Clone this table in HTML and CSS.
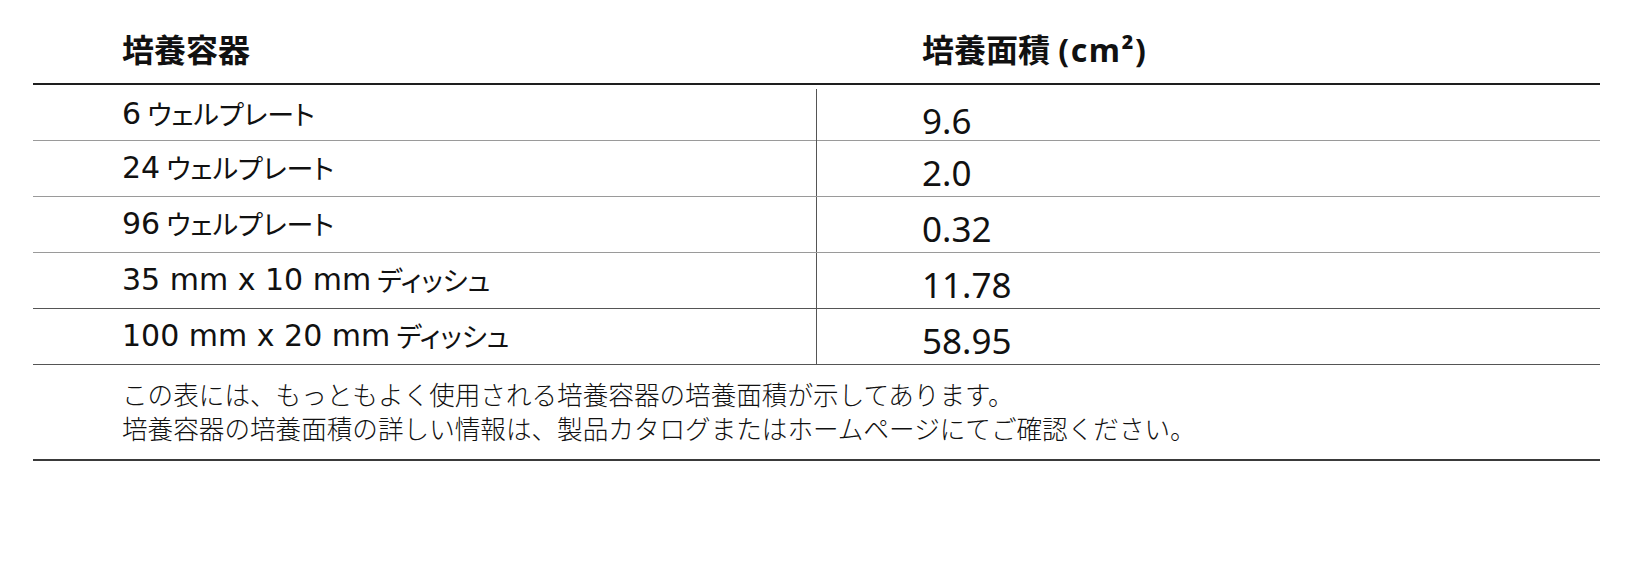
FILE: index.html
```html
<!DOCTYPE html>
<html lang="ja">
<head>
<meta charset="utf-8">
<title>培養面積</title>
<link rel="stylesheet" href="styles.css">
</head>
<body>
<div class="table">
  <div class="head">
    <div class="hcell hleft">培養容器</div>
    <div class="hcell hright">培養面積 <span class="unit">(cm²)</span></div>
  </div>
  <div class="row light first">
    <div class="cell name">6<span class="kana"> ウェルプレート</span></div>
    <div class="cell val">9.6</div>
  </div>
  <div class="row light">
    <div class="cell name">24<span class="kana"> ウェルプレート</span></div>
    <div class="cell val">2.0</div>
  </div>
  <div class="row light">
    <div class="cell name">96<span class="kana"> ウェルプレート</span></div>
    <div class="cell val">0.32</div>
  </div>
  <div class="row dark">
    <div class="cell name">35 mm x 10 mm<span class="kana"> ディッシュ</span></div>
    <div class="cell val">11.78</div>
  </div>
  <div class="row dark">
    <div class="cell name">100 mm x 20 mm<span class="kana"> ディッシュ</span></div>
    <div class="cell val">58.95</div>
  </div>
  <div class="note">
    <p>この表には、もっともよく使用される培養容器の培養面積が示してあります。</p>
    <p>培養容器の培養面積の詳しい情報は、製品カタログまたはホームページにてご確認ください。</p>
  </div>
</div>
</body>
</html>
```

FILE: styles.css
```css
html, body {
  margin: 0;
  padding: 0;
  background: #ffffff;
}
body {
  font-family: "Noto Sans", "Noto Sans CJK JP", sans-serif;
  color: #111111;
}
.table {
  margin-left: 33px;
  width: 1567px;
}
.head {
  display: grid;
  grid-template-columns: 783px 784px;
  height: 85px;
  box-sizing: border-box;
  padding-top: 17px;
  align-items: center;
  border-bottom: 2px solid #1e1e1e;
}
.hcell {
  font-family: "Noto Sans", "Noto Sans CJK JP", sans-serif;
  font-weight: 700;
  font-size: 32px;
  line-height: 40px;
  color: #111;
}
.unit {
  letter-spacing: 1.5px;
}
.hleft { padding-left: 89px; }
.hright { padding-left: 106px; }
.row {
  display: grid;
  grid-template-columns: 783px 784px;
  height: 56px;
  box-sizing: border-box;
}
.row.light { border-bottom: 1px solid #9a9a9a; }
.row.dark { border-bottom: 1px solid #555555; }
.cell {
  display: flex;
  align-items: center;
}
.name {
  padding-left: 89px;
  font-family: "DejaVu Sans", "Noto Sans CJK JP", sans-serif;
  font-size: 30px;
  white-space: pre;
  padding-bottom: 2px;
}
.kana {
  font-family: "Noto Sans CJK JP", sans-serif;
  font-size: 27px;
  font-feature-settings: "palt";
}
.val {
  border-left: 1px solid #555555;
  padding-left: 105px;
  font-size: 35px;
  padding-top: 8px;
}
.first .val {
  margin-top: 4px;
}
.note {
  padding: 12px 0 15px 89px;
  border-bottom: 2px solid #3a3a3a;
  font-family: "Noto Sans CJK JP", sans-serif;
  font-weight: 300;
  font-size: 25.6px;
  line-height: 33.5px;
  color: #111;
}
.note p {
  margin: 0;
}
```
